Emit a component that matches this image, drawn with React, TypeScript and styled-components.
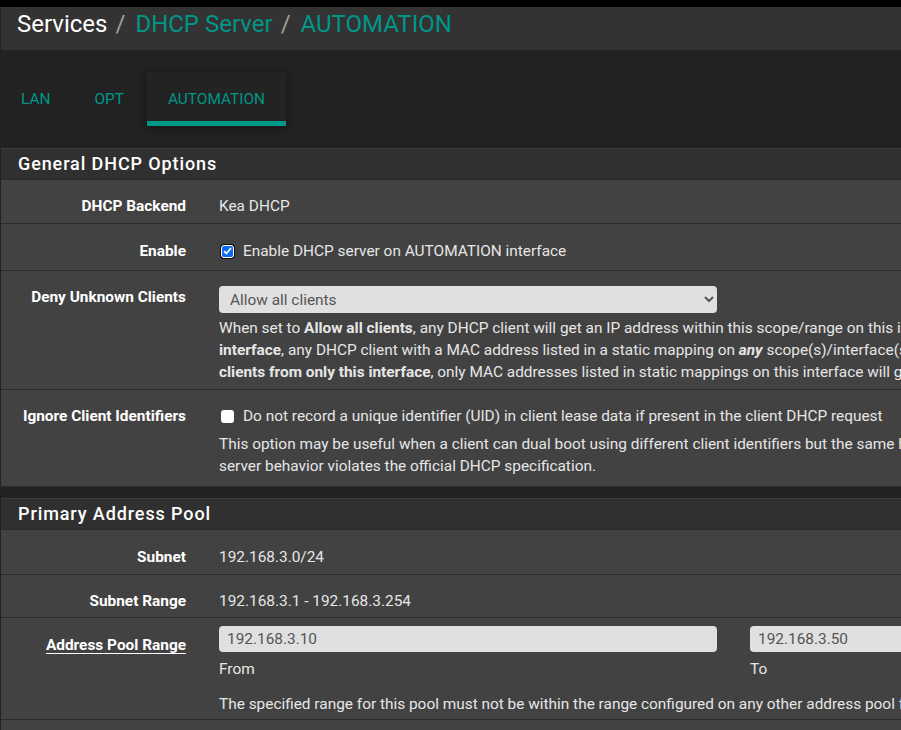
import React from "react";
import styled, { createGlobalStyle } from "styled-components";

const GlobalStyle = createGlobalStyle`
  html, body {
    margin: 0;
    padding: 0;
    background: #222222;
    overflow: hidden;
  }
  body {
    font-family: Roboto, "Noto Sans", "Liberation Sans", sans-serif;
    font-size: 15.4px;
    color: #e0e0e0;
  }
`;

const TEAL = "#009688";

const Page = styled.div`
  width: 1500px;
  min-height: 730px;
  background: #222222;
`;

const TopStrip = styled.div`
  height: 7px;
  background: #000;
`;

const HeaderBar = styled.div`
  margin-left: 1px;
  height: 43px;
  box-sizing: border-box;
  background: #333333;
  display: flex;
  align-items: center;
  padding: 0 0 10px 16px;
  font-size: 24px;
  line-height: 1;
`;

const Crumb = styled.span<{ $link?: boolean }>`
  color: ${(p) => (p.$link ? TEAL : "#ffffff")};
`;

const Slash = styled.span`
  color: #a59f96;
  margin: 0 10px 0 8px;
`;

const TabBar = styled.div`
  display: flex;
  gap: 2px;
  margin-top: 22px;
  height: 54px;
`;

const Tab = styled.div<{ $active?: boolean }>`
  display: flex;
  align-items: center;
  padding: 4px 21px 0;
  box-sizing: border-box;
  height: 54px;
  color: ${TEAL};
  text-transform: uppercase;
  font-size: 15.4px;
  background: ${(p) => (p.$active ? "#232323" : "transparent")};
  border-bottom: 5px solid ${(p) => (p.$active ? TEAL : "transparent")};
  box-shadow: ${(p) => (p.$active ? "0 2px 8px rgba(0,0,0,0.45)" : "none")};
`;

const Panel = styled.section<{ $top: number }>`
  margin-left: 1px;
  margin-top: ${(p) => p.$top}px;
  background: #424242;
`;

const PanelHeading = styled.h2`
  margin: 0;
  height: 32px;
  box-sizing: border-box;
  display: flex;
  align-items: center;
  padding: 0 0 1px 17px;
  background: #303030;
  border-top: 1px solid #3d3d3d;
  border-bottom: 1px solid #2a2a2a;
  color: #ffffff;
  font-size: 18px;
  font-weight: 500;
  letter-spacing: 0.9px;
`;

const Row = styled.div<{ $pt: number; $pb: number }>`
  display: grid;
  grid-template-columns: 204px 1fr;
  padding: ${(p) => `${p.$pt}px 0 ${p.$pb}px`};
  border-bottom: 1px solid #2b2b2b;
  line-height: 22px;
`;

const Label = styled.div<{ $pt?: number }>`
  text-align: right;
  padding-right: 19px;
  padding-top: ${(p) => p.$pt ?? 0}px;
  color: #ffffff;
  font-weight: 700;
`;

const Underlined = styled.span`
  text-decoration: underline;
  text-underline-offset: 3px;
  text-decoration-thickness: 1px;
`;

const Value = styled.div`
  padding-left: 14px;
  color: #e6e6e6;
`;

const CheckLine = styled.label`
  display: flex;
  align-items: center;
  gap: 9px;
  color: #e6e6e6;
`;

const Box = styled.span<{ $checked?: boolean }>`
  width: 13px;
  height: 13px;
  margin-left: 2px;
  flex-shrink: 0;
  box-sizing: border-box;
  border-radius: 3px;
  display: inline-flex;
  align-items: center;
  justify-content: center;
  background: ${(p) => (p.$checked ? "#0b6bf5" : "#ffffff")};
  border: ${(p) => (p.$checked ? "1.5px solid #ffffff" : "none")};
  box-shadow: ${(p) => (p.$checked ? "0 0 0 1px #111" : "none")};
`;

const Select = styled.select`
  width: 498px;
  height: 27px;
  border: none;
  border-radius: 4px;
  background: #e0e0e0;
  color: #555555;
  font-family: Roboto, "Noto Sans", sans-serif;
  font-size: 15.4px;
  padding: 0 7px;
  display: block;
`;

const Help = styled.div<{ $mt?: number }>`
  margin-top: ${(p) => p.$mt ?? 0}px;
  line-height: 22px;
  white-space: nowrap;
  color: #e6e6e6;
`;

const FieldRow = styled.div`
  display: flex;
  gap: 33px;
`;

const Field = styled.div`
  width: 498px;
`;

const TextInput = styled.input`
  width: 100%;
  height: 26px;
  box-sizing: border-box;
  border: none;
  border-radius: 4px;
  background: #e0e0e0;
  color: #555555;
  font-family: Roboto, "Noto Sans", sans-serif;
  font-size: 15.4px;
  padding: 0 8px;
  display: block;
`;

const FieldCaption = styled.div`
  margin-top: 6px;
  line-height: 22px;
`;

const Checkbox = ({ checked }: { checked?: boolean }) => (
  <Box $checked={checked}>
    {checked && (
      <svg width="9" height="8" viewBox="0 0 9 8">
        <path d="M1 4.2 L3.4 6.5 L8 1.2" stroke="#fff" strokeWidth="1.8" fill="none" />
      </svg>
    )}
  </Box>
);

export default function App() {
  return (
    <Page>
      <GlobalStyle />
      <TopStrip />
      <HeaderBar>
        <Crumb>Services</Crumb>
        <Slash>/</Slash>
        <Crumb $link>DHCP Server</Crumb>
        <Slash>/</Slash>
        <Crumb $link>AUTOMATION</Crumb>
      </HeaderBar>

      <TabBar>
        <Tab>LAN</Tab>
        <Tab>OPT</Tab>
        <Tab $active>AUTOMATION</Tab>
      </TabBar>

      <Panel $top={22}>
        <PanelHeading>General DHCP Options</PanelHeading>
        <Row $pt={15} $pb={6}>
          <Label>DHCP Backend</Label>
          <Value>Kea DHCP</Value>
        </Row>
        <Row $pt={16} $pb={8}>
          <Label>Enable</Label>
          <Value>
            <CheckLine>
              <Checkbox checked />
              Enable DHCP server on AUTOMATION interface
            </CheckLine>
          </Value>
        </Row>
        <Row $pt={15} $pb={6}>
          <Label>Deny Unknown Clients</Label>
          <Value>
            <Select defaultValue="all">
              <option value="all">Allow all clients</option>
            </Select>
            <Help $mt={4}>
              When set to <b>Allow all clients</b>, any DHCP client will get an IP address within this
              scope/range on this interface. If set to <b>Allow known clients from any</b>
              <br />
              <b>interface</b>, any DHCP client with a MAC address listed in a static mapping on{" "}
              <b>
                <i>any</i>
              </b>{" "}
              scope(s)/interface(s) will get an IP address. If set to <b>Allow known</b>
              <br />
              <b>clients from only this interface</b>, only MAC addresses listed in static mappings on
              this interface will get an IP address within this scope/range.
            </Help>
          </Value>
        </Row>
        <Row $pt={15} $pb={9}>
          <Label>Ignore Client Identifiers</Label>
          <Value>
            <CheckLine>
              <Checkbox />
              Do not record a unique identifier (UID) in client lease data if present in the client
              DHCP request
            </CheckLine>
            <Help $mt={6}>
              This option may be useful when a client can dual boot using different client
              identifiers but the same hardware (MAC) address. Note that the resulting
              <br />
              server behavior violates the official DHCP specification.
            </Help>
          </Value>
        </Row>
      </Panel>

      <Panel $top={11}>
        <PanelHeading>Primary Address Pool</PanelHeading>
        <Row $pt={16} $pb={6}>
          <Label>Subnet</Label>
          <Value>192.168.3.0/24</Value>
        </Row>
        <Row $pt={15} $pb={5}>
          <Label>Subnet Range</Label>
          <Value>192.168.3.1 - 192.168.3.254</Value>
        </Row>
        <Row $pt={8} $pb={4}>
          <Label $pt={8}>
            <Underlined>Address Pool Range</Underlined>
          </Label>
          <Value>
            <FieldRow>
              <Field>
                <TextInput defaultValue="192.168.3.10" />
                <FieldCaption>From</FieldCaption>
              </Field>
              <Field>
                <TextInput defaultValue="192.168.3.50" />
                <FieldCaption>To</FieldCaption>
              </Field>
            </FieldRow>
            <Help $mt={13}>
              The specified range for this pool must not be within the range configured on any
              other address pool for this interface.
            </Help>
          </Value>
        </Row>
        <Row $pt={16} $pb={8}>
          <Label>&nbsp;</Label>
          <Value>&nbsp;</Value>
        </Row>
      </Panel>
    </Page>
  );
}
